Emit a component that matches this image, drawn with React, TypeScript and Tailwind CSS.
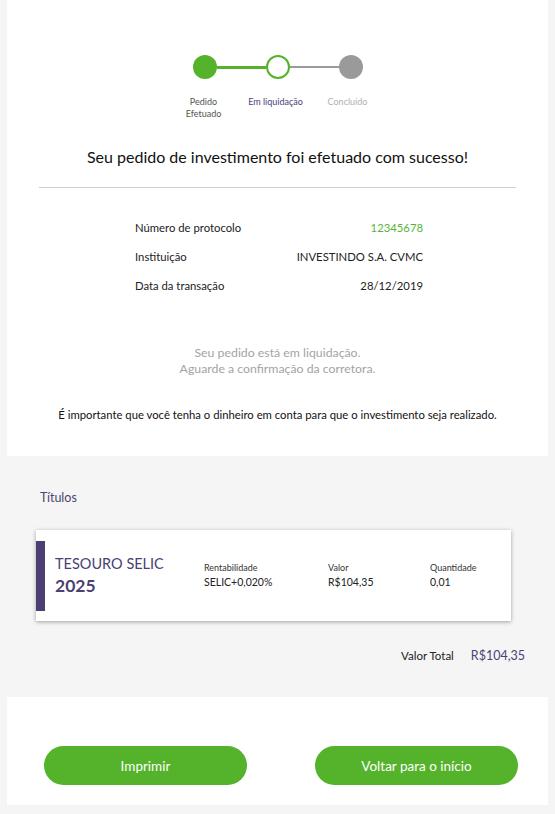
import React from "react"

const font = { fontFamily: "Lato, 'Open Sans', sans-serif" }

function Stepper() {
  return (
    <div className="flex flex-col items-center pt-[55px]">
      <div className="flex items-center">
        <div className="w-6 h-6 rounded-full bg-[#55b32b]" />
        <div className="w-[49px] h-[3px] bg-[#55b32b]" />
        <div className="w-6 h-6 rounded-full border-2 border-[#55b32b] bg-white" />
        <div className="w-[49px] h-[2px] bg-[#9a9a9a]" />
        <div className="w-6 h-6 rounded-full bg-[#9a9a9a]" />
      </div>
      <div className="flex items-start mt-[17px] text-[9px] leading-[12px]">
        <div className="w-[72px] text-center text-[#555] ml-[-4px]">
          Pedido<br />Efetuado
        </div>
        <div className="w-[72px] text-center text-[#4b4277]">Em liquidação</div>
        <div className="w-[72px] text-center text-[#b0b0b0]">Concluído</div>
      </div>
    </div>
  )
}

function Row({ label, value, green }: { label: string; value: string; green?: boolean }) {
  return (
    <div className="flex justify-between text-[11.3px] leading-[29px] text-[#222]">
      <span>{label}</span>
      <span className={green ? "text-[#58b43a]" : ""}>{value}</span>
    </div>
  )
}

function Col({ label, value }: { label: string; value: string }) {
  return (
    <div className="flex flex-col">
      <span className="text-[9px] leading-[12px] text-[#333]">{label}</span>
      <span className="text-[10.5px] leading-[16px] text-[#222]">{value}</span>
    </div>
  )
}

export default function App() {
  return (
    <div className="min-h-[814px] w-[555px] bg-[#f4f5f4] px-[7px]" style={font}>
      {/* Resumo */}
      <div className="bg-white h-[456px] flex flex-col">
        <Stepper />
        <h1 className="text-center text-[16px] leading-[22px] text-[#111] mt-[26px]">
          Seu pedido de investimento foi efetuado com sucesso!
        </h1>
        <div className="mx-[32px] mt-[19px] h-px bg-[#cfcfcf]" />
        <div className="ml-[128px] w-[288px] mt-[25px]">
          <Row label="Número de protocolo" value="12345678" green />
          <Row label="Instituição" value="INVESTINDO S.A. CVMC" />
          <Row label="Data da transação" value="28/12/2019" />
        </div>
        <p className="text-center text-[12.3px] leading-[16px] text-[#a3a3a3] mt-[45px]">
          Seu pedido está em liquidação.
          <br />
          Aguarde a confirmação da corretora.
        </p>
        <p className="text-center text-[11.3px] leading-[16px] text-[#111] mt-[30px]">
          É importante que você tenha o dinheiro em conta para que o investimento seja realizado.
        </p>
      </div>

      {/* Títulos */}
      <div className="pt-[33px] px-[29px]">
        <h2 className="pl-[4px] text-[12.5px] leading-[17px] text-[#4b4670]">Títulos</h2>
        <div className="mt-[24px] bg-white h-[91px] w-[475px] shadow-[0_1px_4px_rgba(0,0,0,0.35)] flex items-center">
          <div className="w-[9px] h-[70px] bg-[#4b3f73]" />
          <div className="w-[159px] pl-[10px] text-[#4b3f73]">
            <div className="text-[14.5px] leading-[19px]">TESOURO SELIC</div>
            <div className="text-[17.5px] leading-[24px] font-bold mt-[1px]">2025</div>
          </div>
          <div className="w-[124px]">
            <Col label="Rentabilidade" value="SELIC+0,020%" />
          </div>
          <div className="w-[102px]">
            <Col label="Valor" value="R$104,35" />
          </div>
          <Col label="Quantidade" value="0,01" />
        </div>
        <div className="flex justify-end items-baseline mt-[26px] mr-[-6px]">
          <span className="text-[11.5px] text-[#222]">Valor Total</span>
          <span className="text-[12.5px] text-[#4b4277] ml-[17px]">R$104,35</span>
        </div>
      </div>

      {/* Ações */}
      <div className="bg-white mt-[31px] h-[108px] flex items-center justify-between pl-[37px] pr-[30px] pt-[30px]">
        <button className="w-[203px] h-[39px] rounded-[20px] bg-[#55b32b] text-white text-[13.5px]">
          Imprimir
        </button>
        <button className="w-[203px] h-[39px] rounded-[20px] bg-[#55b32b] text-white text-[13.5px]">
          Voltar para o início
        </button>
      </div>
    </div>
  )
}
